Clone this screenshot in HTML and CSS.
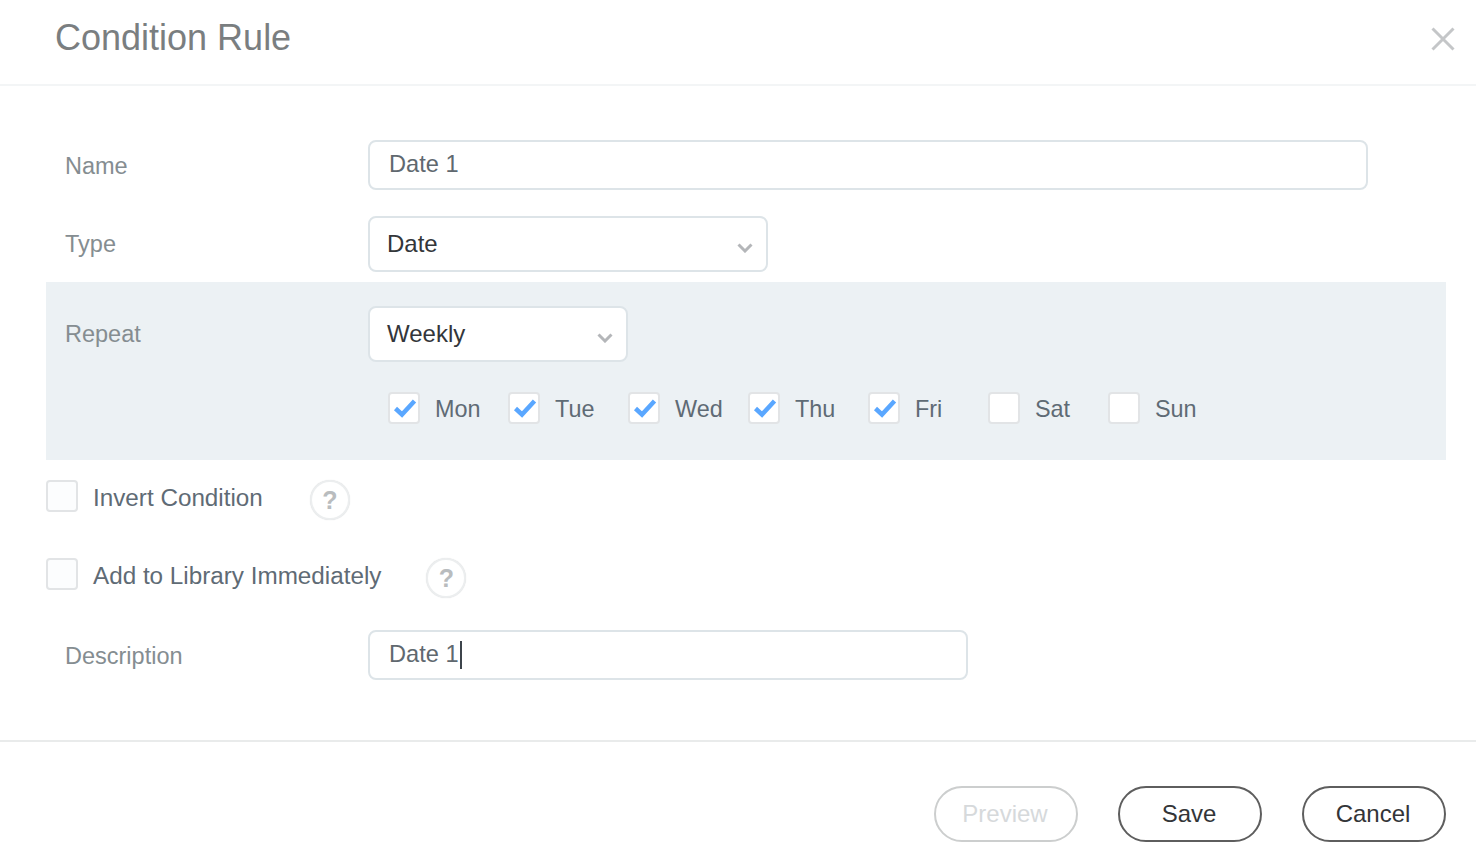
FILE: index.html
```html
<!DOCTYPE html>
<html lang="en">
<head>
<meta charset="utf-8">
<title>Condition Rule</title>
<link rel="stylesheet" href="styles.css">
</head>
<body>
<div class="dialog">
  <header class="header">
    <h1 class="title">Condition Rule</h1>
    <svg class="close" width="24" height="24" viewBox="0 0 24 24"><path d="M1.5 1.5 22.5 22.5M22.5 1.5 1.5 22.5"/></svg>
  </header>
  <main class="body">
    <div class="row row-name">
      <label class="label label-low">Name</label>
      <div class="input input-wide">Date 1</div>
    </div>
    <div class="row row-type">
      <label class="label">Type</label>
      <div class="select select-type">Date<svg class="chev" width="16" height="10" viewBox="0 0 16 10"><path d="M1.500 1.500 8 8l6.500-6.500"/></svg></div>
    </div>
    <section class="repeat">
      <div class="row row-repeat">
        <label class="label">Repeat</label>
        <div class="select select-repeat">Weekly<svg class="chev" width="16" height="10" viewBox="0 0 16 10"><path d="M1.500 1.500 8 8l6.500-6.500"/></svg></div>
      </div>
      <div class="days">
        <div class="day"><span class="box"><svg class="tick" width="24" height="20" viewBox="0 0 24 20"><path d="M2.500 10.500 9 16.500 21.500 3"/></svg></span><span class="day-name">Mon</span></div>
        <div class="day"><span class="box"><svg class="tick" width="24" height="20" viewBox="0 0 24 20"><path d="M2.500 10.500 9 16.500 21.500 3"/></svg></span><span class="day-name">Tue</span></div>
        <div class="day"><span class="box"><svg class="tick" width="24" height="20" viewBox="0 0 24 20"><path d="M2.500 10.500 9 16.500 21.500 3"/></svg></span><span class="day-name">Wed</span></div>
        <div class="day"><span class="box"><svg class="tick" width="24" height="20" viewBox="0 0 24 20"><path d="M2.500 10.500 9 16.500 21.500 3"/></svg></span><span class="day-name">Thu</span></div>
        <div class="day"><span class="box"><svg class="tick" width="24" height="20" viewBox="0 0 24 20"><path d="M2.500 10.500 9 16.500 21.500 3"/></svg></span><span class="day-name">Fri</span></div>
        <div class="day"><span class="box"></span><span class="day-name">Sat</span></div>
        <div class="day"><span class="box"></span><span class="day-name">Sun</span></div>
      </div>
    </section>
    <div class="check-row check-invert">
      <span class="box box-off"></span>
      <span class="check-label">Invert Condition</span>
      <span class="help help-invert">?</span>
    </div>
    <div class="check-row check-library">
      <span class="box box-off"></span>
      <span class="check-label">Add to Library Immediately</span>
      <span class="help help-library">?</span>
    </div>
    <div class="row row-desc">
      <label class="label label-low">Description</label>
      <div class="input input-desc">Date 1<span class="caret"></span></div>
    </div>
  </main>
  <footer class="footer">
    <button class="btn btn-disabled" type="button">Preview</button>
    <button class="btn" type="button">Save</button>
    <button class="btn" type="button">Cancel</button>
  </footer>
</div>
</body>
</html>
```
FILE: styles.css
```css
* { box-sizing: border-box; }
html, body { margin: 0; padding: 0; background: #fff; }
body { font-family: "Liberation Sans", Arial, sans-serif; width: 1476px; height: 866px; overflow: hidden; }
.dialog { display: flex; flex-direction: column; height: 866px; }
.header { height: 86px; padding: 0 21px 10px 55px; border-bottom: 2px solid #f3f5f6; display: flex; align-items: center; justify-content: space-between; }
.title { margin: 2px 0 0; font-size: 36px; font-weight: 400; color: #7a7e80; line-height: 40px; }
.close { margin-top: 4px; }
.close path { stroke: #c4c6c8; stroke-width: 3; fill: none; }
.body { height: 656px; padding: 54px 30px 0 46px; border-bottom: 2px solid #e9ebeb; }
.row { display: flex; align-items: center; }
.label { width: 322px; padding-left: 19px; font-size: 23.5px; color: #858d91; }
.label-low { padding-top: 2px; }
.input { height: 50px; border: 2px solid #dde4e8; border-radius: 8px; padding: 0 19px 2px; display: flex; align-items: center; font-size: 23.6px; color: #60686f; background: #fff; }
.input-wide { width: 1000px; }
.input-desc { width: 600px; }
.select { height: 56px; border: 2px solid #dde4e8; border-radius: 8px; padding: 0 13px 0 17px; display: flex; align-items: center; justify-content: space-between; font-size: 24px; color: #33363a; background: #fff; }
.select-type { width: 400px; }
.select-repeat { width: 260px; }
.chev { margin-top: 7px; }
.chev path { stroke: #b4b6b9; stroke-width: 3; fill: none; }
.row-type { margin-top: 26px; }
.repeat { margin-top: 10px; height: 178px; background: #ecf1f4; padding-top: 24px; }
.days { display: flex; margin: 30px 0 0 342px; }
.day { width: 120px; display: flex; align-items: center; gap: 15px; }
.box { width: 32px; height: 32px; flex: none; border: 2px solid #e2e4e6; border-radius: 4px; background: #fff; display: flex; align-items: center; justify-content: center; }
.box-off { background: #fcfdfe; }
.tick { margin-left: 2px; }
.tick path { stroke: #5aa7ff; stroke-width: 4.5; fill: none; }
.day-name { font-size: 23.4px; color: #5f6b75; padding-top: 3px; }
.check-label { font-size: 24.25px; color: #5f6b75; }
.check-row { display: flex; align-items: flex-start; }
.check-row .check-label { margin-left: 15px; line-height: 35px; height: 35px; }
.check-invert { margin-top: 20px; height: 40px; }
.check-library { margin-top: 38px; height: 40px; }
.help { width: 40px; height: 40px; border: 2px solid #eceeef; border-radius: 50%; box-shadow: 0 0 1px #d8dadb; display: flex; align-items: center; justify-content: center; font-size: 25px; font-weight: 700; color: #b9bcbe; background: #fff; }
.help-invert { margin-left: 47px; }
.help-library { margin-left: 45px; }
.row-desc { margin-top: 32px; }
.caret { width: 2px; height: 28px; background: #3d444b; margin-left: 1px; margin-top: 2px; }
.footer { display: flex; justify-content: flex-end; gap: 40px; padding: 44px 30px 0 0; }
.btn { width: 144px; height: 56px; border: 2px solid #5e5e5e; border-radius: 28px; background: #fff; font-family: "Liberation Sans", Arial, sans-serif; font-size: 24px; color: #333538; padding: 0 2px 0 0; }
.btn-disabled { border-color: #cccece; color: #d6d9db; }
```
